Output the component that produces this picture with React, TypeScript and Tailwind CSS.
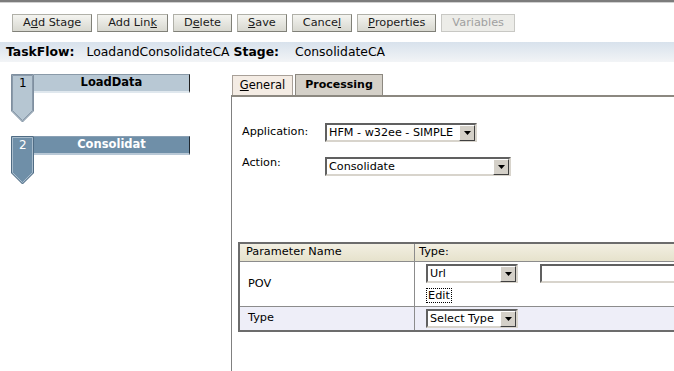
import React from "react";

const F = { fontFamily: '"DejaVu Sans", Verdana, sans-serif' };

function Btn({ children, disabled }: { children: React.ReactNode; disabled?: boolean }) {
  return (
    <div
      className={
        "h-[18px] flex items-center justify-center px-[10px] text-[11.3px] leading-none border " +
        (disabled
          ? "text-[#a0a0a0] bg-[#ecece8] border-[#c8c8c4]"
          : "text-[#1a1a1a] bg-gradient-to-b from-[#f4f4f0] to-[#d8d8d0] border-t-[#b0b0a8] border-l-[#b0b0a8] border-r-[#808078] border-b-[#808078]")
      }
    >
      {children}
    </div>
  );
}

function Arrow() {
  return (
    <div className="w-[16px] h-[16px] bg-[#d4d0c8] border border-t-[#ffffff] border-l-[#ffffff] border-r-[#404040] border-b-[#404040] flex items-center justify-center shrink-0">
      <svg width="7" height="4" viewBox="0 0 7 4">
        <polygon points="0,0 7,0 3.5,4" fill="#000" />
      </svg>
    </div>
  );
}

function Select({ w, text }: { w: number; text: string }) {
  return (
    <div
      className="h-[19px] flex items-center border-2 border-t-[#606060] border-l-[#606060] border-r-[#d8d4cc] border-b-[#d8d4cc] bg-white"
      style={{ width: w }}
    >
      <div className="flex-1 pl-[2px] text-[11.2px] leading-none text-black whitespace-nowrap overflow-hidden">{text}</div>
      <Arrow />
    </div>
  );
}

function Stage({ n, label, active }: { n: string; label: string; active?: boolean }) {
  const fill = active ? "#6f8fa8" : "#b6c6d2";
  const stroke = active ? "#a8bccc" : "#8a9aaa";
  return (
    <div className="flex items-start ml-[11px]">
      <div className="relative w-[23px] h-[49px]">
        <svg width="23" height="49" viewBox="0 0 23 49" className="absolute inset-0">
          <polygon points="0.5,0.5 22.5,0.5 22.5,37 11.5,48 0.5,37" fill={fill} stroke={active ? "#506c84" : "#7f8f9f"} />
          <polygon points="1.5,1.5 21.5,1.5 21.5,36.5 11.5,46.5 1.5,36.5" fill="none" stroke={stroke} />
        </svg>
        <div className={"relative pt-[3px] pl-[8px] text-[12px] leading-none " + (active ? "text-white" : "text-black")}>{n}</div>
      </div>
      <div
        className={
          "w-[156px] h-[19px] flex items-center justify-center text-[11.5px] font-bold leading-none border-t border-r border-b-2 " +
          (active
            ? "bg-[#6f8fa8] text-white border-t-[#8aa0b4] border-r-[#202830] border-b-[#b8c8d6]"
            : "bg-[#b8c8d4] text-black border-t-[#8a9aa8] border-r-[#202020] border-b-[#e0e8ee]")
        }
      >
        {label}
      </div>
    </div>
  );
}

export default function App() {
  return (
    <div className="w-[674px] h-[371px] bg-white overflow-hidden flex flex-col" style={F}>
      <div className="h-[2px] bg-[#7c7c7c] shrink-0" />
      <div className="h-[1px] bg-[#d0d0d0] shrink-0" />
      <div className="flex gap-[5px] pl-[12px] pt-[11px] shrink-0">
        <Btn>A<u>d</u>d Stage</Btn>
        <Btn>Add Lin<u>k</u></Btn>
        <Btn>D<u>e</u>lete</Btn>
        <Btn><u>S</u>ave</Btn>
        <Btn>Cance<u>l</u></Btn>
        <Btn><u>P</u>roperties</Btn>
        <Btn disabled>Variables</Btn>
      </div>
      <div className="mt-[10px] h-[20px] shrink-0 flex items-center text-[12.4px] text-black bg-gradient-to-b from-[#d8e2ec] to-[#f2f4f6]">
        <span className="font-bold ml-[6px]">TaskFlow:</span>
        <span className="ml-[12px]">LoadandConsolidateCA</span>
        <span className="font-bold ml-[4px]">Stage:</span>
        <span className="ml-[16px]">ConsolidateCA</span>
      </div>
      <div className="flex flex-1 min-h-0">
        <div className="w-[231px] shrink-0 flex flex-col gap-[13px] pt-[12px]">
          <Stage n="1" label="LoadData" />
          <Stage n="2" label="Consolidat" active />
        </div>
        <div className="flex-1 flex flex-col pt-[12px]">
          <div className="flex items-end gap-[2px] pl-[1px]">
            <div className="h-[20px] w-[61px] flex items-center justify-center text-[11.5px] text-black bg-[#f4ece4] border border-b-0 border-[#a8a098]">
              <span><u>G</u>eneral</span>
            </div>
            <div className="h-[21px] w-[88px] flex items-center justify-center text-[11px] font-bold text-black bg-[#d4d0c8] border border-b-0 border-[#8c8880]">
              Processing
            </div>
          </div>
          <div className="flex-1 border-t-2 border-l border-t-[#8c8880] border-l-[#808080] flex flex-col pl-[10px]">
            <div className="flex items-center mt-[26px]">
              <div className="w-[83px] text-[11.2px] text-black">Application:</div>
              <Select w={152} text="HFM - w32ee - SIMPLE" />
            </div>
            <div className="flex items-center mt-[15px]">
              <div className="w-[83px] text-[11.2px] text-black -mt-[6px]">Action:</div>
              <Select w={186} text="Consolidate" />
            </div>
            <div className="mt-[66px] -ml-[4px] border-2 border-r-0 border-[#6c6c6c] text-[11.3px] text-black">
              <div className="flex h-[18px] bg-gradient-to-b from-[#f2efe2] to-[#e6e2cc] border-b border-[#8c8c8c]">
                <div className="w-[175px] pl-[6px] flex items-center border-r border-[#8c8c8c]">Parameter Name</div>
                <div className="flex-1 pl-[4px] flex items-center">Type:</div>
              </div>
              <div className="flex h-[45px] border-b border-[#8c8c8c]">
                <div className="w-[175px] pl-[8px] flex items-center border-r border-[#8c8c8c]">POV</div>
                <div className="flex-1 pl-[11px] pt-[2px] flex flex-col">
                  <div className="flex items-center gap-[22px]">
                    <Select w={92} text="Url" />
                    <div className="flex-1 h-[19px] border-2 border-t-[#606060] border-l-[#606060] border-r-0 border-b-[#d8d4cc] bg-white" />
                  </div>
                  <div className="mt-[5px] w-fit px-[1px] border border-dotted border-black leading-[13px]">Edit</div>
                </div>
              </div>
              <div className="flex h-[23px] bg-[#eeeef8]">
                <div className="w-[175px] pl-[8px] flex items-center border-r border-[#8c8c8c]">Type</div>
                <div className="flex-1 pl-[11px] flex items-center">
                  <Select w={92} text="Select Type" />
                </div>
              </div>
            </div>
          </div>
        </div>
      </div>
    </div>
  );
}
